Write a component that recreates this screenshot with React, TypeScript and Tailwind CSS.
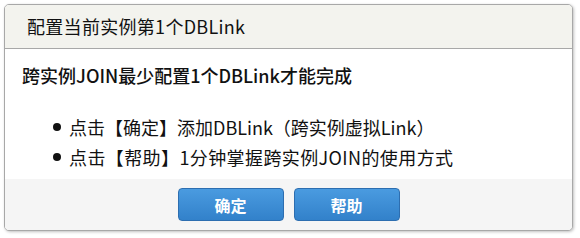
import React from "react";

const font = { fontFamily: '"Noto Sans CJK SC", "Noto Sans", sans-serif' };

export default function App() {
  return (
    <div className="w-[580px] h-[238px] bg-white pt-[4px] pl-[4px]" style={font}>
      <div className="w-[569px] h-[227px] flex flex-col border border-[#a8a8a8] rounded-[5px] overflow-hidden bg-white shadow-[1px_1px_3px_rgba(0,0,0,0.25)]">
        <div className="h-[44px] shrink-0 bg-[#f3f3ee] border-b border-[#a8a8a8] flex items-center pl-[22px] text-[18px] text-[#111] tracking-[0.3px]">
          配置当前实例第1个DBLink
        </div>
        <div className="flex-1 bg-white pt-[11px] pl-[17px] text-[18px] text-[#111]">
          <div className="leading-[30px] font-medium">跨实例JOIN最少配置1个DBLink才能完成</div>
          <ul className="mt-[22px] pl-[31px]">
            <li className="flex items-center leading-[30px]">
              <span className="w-[8px] h-[8px] rounded-full bg-[#111] mr-[8px] shrink-0" />
              点击【确定】添加DBLink（跨实例虚拟Link）
            </li>
            <li className="flex items-center leading-[30px] tracking-[0.4px]">
              <span className="w-[8px] h-[8px] rounded-full bg-[#111] mr-[8px] shrink-0" />
              点击【帮助】1分钟掌握跨实例JOIN的使用方式
            </li>
          </ul>
        </div>
        <div className="h-[51px] shrink-0 bg-[#f5f5f5] flex items-center justify-center gap-[10px]">
          <button className="w-[106px] h-[33px] rounded-[4px] border border-[#2d6eb0] bg-gradient-to-b from-[#4a9be0] to-[#3281ca] text-white text-[16px] font-semibold">
            确定
          </button>
          <button className="w-[106px] h-[33px] rounded-[4px] border border-[#2d6eb0] bg-gradient-to-b from-[#4a9be0] to-[#3281ca] text-white text-[16px] font-semibold">
            帮助
          </button>
        </div>
      </div>
    </div>
  );
}
